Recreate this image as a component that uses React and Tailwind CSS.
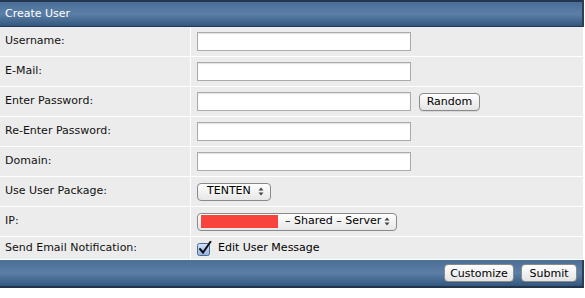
import React from "react";

const font = { fontFamily: '"DejaVu Sans", Verdana, sans-serif' };

function Arrows() {
  return (
    <svg width="6" height="9" viewBox="0 0 6 9" className="ml-auto">
      <path d="M3 0.5 L5.5 3.5 L0.5 3.5 Z" fill="#444" />
      <path d="M3 8.5 L5.5 5.5 L0.5 5.5 Z" fill="#444" />
    </svg>
  );
}

function Input() {
  return <div className="w-[214px] h-[19px] bg-white border border-[#ababab] shadow-[inset_0_1px_1px_rgba(0,0,0,0.12)]" />;
}

function Btn({ children, className = "" }) {
  return (
    <div
      className={
        "h-[18px] flex items-center justify-center rounded-[4px] border border-[#8a8a8a] bg-gradient-to-b from-white to-[#e4e4e4] text-[11px] text-black leading-none shadow-[0_1px_0_rgba(0,0,0,0.08)] " +
        className
      }
    >
      {children}
    </div>
  );
}

const rows = [
  "Username:",
  "E-Mail:",
  "Enter Password:",
  "Re-Enter Password:",
  "Domain:",
  "Use User Package:",
  "IP:",
  "Send Email Notification:",
];

function Field({ i }) {
  if (i <= 4) {
    return (
      <div className="flex items-center gap-[8px]">
        <Input />
        {i === 2 && <Btn className="w-[61px] ml-0">Random</Btn>}
      </div>
    );
  }
  if (i === 5) {
    return (
      <div className="w-[74px] h-[18px] rounded-[4px] border border-[#8a8a8a] bg-gradient-to-b from-white to-[#e6e6e6] flex items-center pl-[9px] pr-[6px] text-[11px] text-black">
        <span>TENTEN</span>
        <Arrows />
      </div>
    );
  }
  if (i === 6) {
    return (
      <div className="w-[200px] h-[18px] rounded-[4px] border border-[#8a8a8a] bg-gradient-to-b from-white to-[#e6e6e6] flex items-center pl-[3px] pr-[6px] text-[11px] text-black">
        <div className="w-[77px] h-[13px] bg-[#f8423c]" />
        <span className="ml-[7px]">– Shared – Server</span>
        <Arrows />
      </div>
    );
  }
  return (
    <div className="flex items-center gap-[6px] text-[11px] text-black">
      <svg width="15" height="15" viewBox="0 0 15 15">
        <defs>
          <linearGradient id="cb" x1="0" y1="0" x2="0" y2="1">
            <stop offset="0" stopColor="#d4e6fb" />
            <stop offset="1" stopColor="#8fb4e3" />
          </linearGradient>
        </defs>
        <rect x="0.5" y="2.5" width="12" height="12" rx="2" fill="url(#cb)" stroke="#4b6a96" />
        <path d="M3 8 L6 11.5 L13.5 0.8" fill="none" stroke="#111" strokeWidth="2" strokeLinecap="round" />
      </svg>
      <span>Edit User Message</span>
    </div>
  );
}

export default function App() {
  return (
    <div className="w-[585px] h-[298px] bg-white" style={font}>
      <div className="w-[584px] border-r-[2px] border-[#2d3f55]">
        <div className="h-[27px] border-t-[2px] border-[#6f7780] bg-gradient-to-b from-[#4a6e96] via-[#5b7fa7] to-[#33587f] flex items-center pl-[5px] text-[11px] text-white border-b border-[#22364f]">
          Create User
        </div>
      </div>
      <div className="w-[583px] flex flex-col">
        {rows.map((r, i) => (
          <div key={r} className={"flex border-b border-white " + (i === 7 ? "h-[23px]" : "h-[30px]")}>
            <div className="w-[191px] bg-[#ececec] flex items-center pl-[5px] text-[11px] text-[#111] border-r border-white">
              {r}
            </div>
            <div className="flex-1 bg-[#ececec] flex items-center pl-[6px]">
              <Field i={i} />
            </div>
          </div>
        ))}
      </div>
      <div className="w-[584px] h-[28px] border-r-[2px] border-[#2d3f55] bg-gradient-to-b from-[#4a6e96] via-[#5b7fa7] to-[#33587f] border-b-[2px] border-b-[#23344a] flex items-center justify-end gap-[7px] pr-[5px]">
        <Btn className="w-[70px]">Customize</Btn>
        <Btn className="w-[56px]">Submit</Btn>
      </div>
    </div>
  );
}
